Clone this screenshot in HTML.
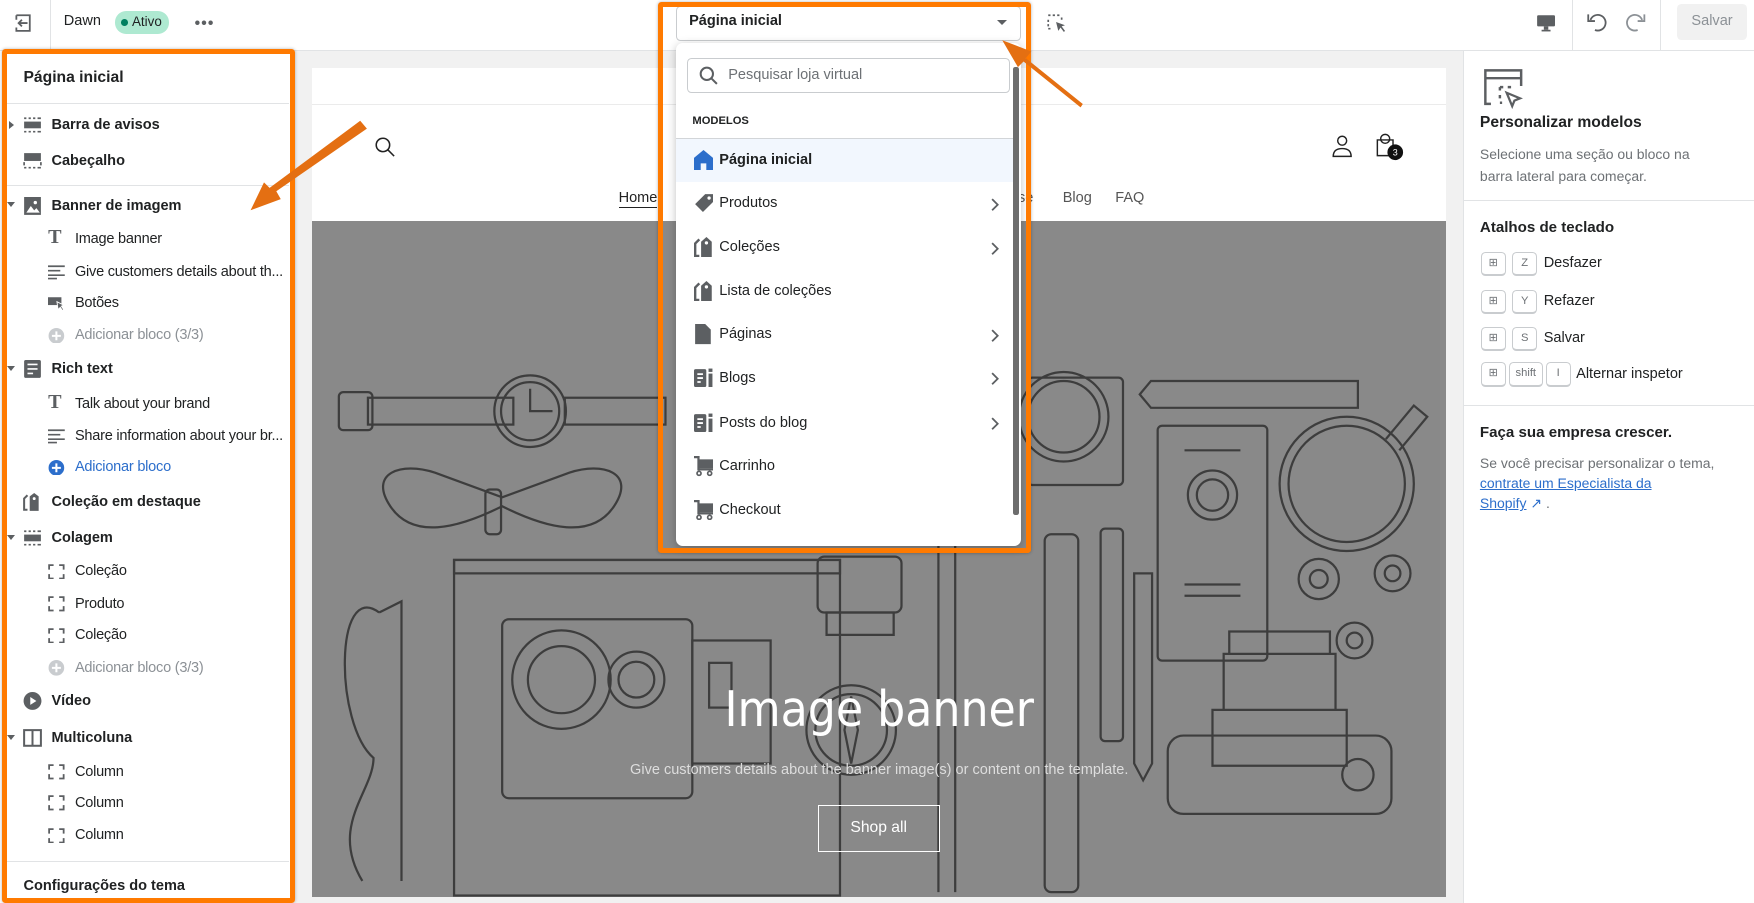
<!DOCTYPE html>
<html><head><meta charset="utf-8">
<style>
*{box-sizing:border-box;margin:0;padding:0}
html,body{width:1754px;height:903px;overflow:hidden;background:#fff}
#r{position:relative;width:1568px;height:807px;zoom:1.11862;font-family:"Liberation Sans",sans-serif;color:#202223;font-size:13px;background:#f1f1f1;overflow:hidden}
.a{position:absolute}
.b{font-weight:bold}
.sb{left:0;top:46px;width:262px;height:761px;background:#fff}
.it{position:absolute;left:0;width:258px;height:20px;line-height:20px;white-space:nowrap}
.it .t{position:absolute;left:46px}
.it.k .t{left:67px;font-weight:normal;letter-spacing:-0.2px}
.it .ic{position:absolute;left:21px;top:2px;width:17px;height:16px}
.it.k .ic{left:43px;top:3px;width:15px;height:14px}
.car{position:absolute;left:6px;top:7px;width:0;height:0;border-left:4px solid transparent;border-right:4px solid transparent;border-top:5px solid #5c5f62}
.carr{position:absolute;left:8px;top:6px;width:0;height:0;border-top:4px solid transparent;border-bottom:4px solid transparent;border-left:5px solid #5c5f62}
.hr{position:absolute;height:1px;background:#e1e3e5}
.dd{position:absolute;left:604px;top:38px;width:309px;height:450px;background:#fff;border-radius:6px;box-shadow:0 2px 8px rgba(0,0,0,.25)}
.di{position:absolute;left:0;width:302px;height:39px;line-height:39px;font-size:13px}
.di .t{position:absolute;left:39px}
.di svg{position:absolute;left:16px;top:10px}
.chev{position:absolute;left:282px !important;top:14px !important}
.key{position:absolute;height:22px;border:1px solid #c9cccf;border-bottom-width:2px;border-radius:4px;font-size:10px;color:#6d7175;text-align:center;line-height:19px}
.st{fill:none;stroke:#3d3d3d;stroke-width:2}
</style></head><body><div id="r">

<div class="a" style="left:0;top:0;width:1568px;height:46px;background:#fff;border-bottom:1px solid #e1e3e5"></div>
<div class="a" style="left:45px;top:0;width:1px;height:46px;background:#e1e3e5"></div>
<svg class="a" style="left:12px;top:12px" width="18" height="18" viewBox="0 0 18 18"><path d="M3 2h12v14H3v-3M3 6V2M13 9H5m3-3L5 9l3 3" fill="none" stroke="#5c5f62" stroke-width="1.6"/></svg>
<div class="a" style="left:57px;top:12px;font-size:13px">Dawn</div>
<div class="a" style="left:103px;top:10px;width:48px;height:20px;border-radius:10px;background:#aee9d1;font-size:12px;line-height:20px;padding-left:15px;color:#202223">Ativo</div>
<div class="a" style="left:108px;top:17px;width:6px;height:6px;border-radius:3px;background:#007f5f"></div>
<div class="a" style="left:174px;top:13px;font-size:14px;font-weight:bold;letter-spacing:1px;color:#5c5f62">•••</div>

<div class="a" style="left:604px;top:5px;width:309px;height:32px;border:1px solid #c9cccf;border-radius:4px;background:#fff"></div>
<div class="a b" style="left:616px;top:12px;font-size:13px">Página inicial</div>
<div class="a" style="left:891px;top:18px;border-left:5px solid transparent;border-right:5px solid transparent;border-top:5px solid #5c5f62"></div>
<svg class="a" style="left:935px;top:12px" width="18" height="18" viewBox="0 0 18 18"><path d="M2 2h2M6 2h2M10 2h2M2 6v2M2 10v2M2 14h2M14 4v2" stroke="#5c5f62" stroke-width="1.5" fill="none"/><path d="M9 8l8 3-3 1 3 4-1 1-3-4-2 3z" fill="#5c5f62"/></svg>

<svg class="a" style="left:1373px;top:12px" width="18" height="18" viewBox="0 0 18 18"><rect x="1" y="2" width="16" height="10" rx="1" fill="#5c5f62"/><rect x="7" y="12" width="4" height="3" fill="#5c5f62"/><rect x="5" y="15" width="8" height="1.5" fill="#5c5f62"/></svg>
<div class="a" style="left:1405px;top:0;width:1px;height:46px;background:#e1e3e5"></div>
<svg class="a" style="left:1418px;top:10px" width="22" height="20" viewBox="0 0 22 20"><path d="M4 8a7 7 0 1 1 4 9" fill="none" stroke="#5c5f62" stroke-width="1.6"/><path d="M2 3v6h6" fill="none" stroke="#5c5f62" stroke-width="1.6"/></svg>
<svg class="a" style="left:1450px;top:10px" width="22" height="20" viewBox="0 0 22 20"><path d="M18 8a7 7 0 1 0-4 9" fill="none" stroke="#8c9196" stroke-width="1.6"/><path d="M20 3v6h-6" fill="none" stroke="#8c9196" stroke-width="1.6"/></svg>
<div class="a" style="left:1484px;top:0;width:1px;height:46px;background:#e1e3e5"></div>
<div class="a" style="left:1499px;top:4px;width:63px;height:32px;background:#f1f1f1;border-radius:4px;color:#8c9196;text-align:center;line-height:32px;font-size:13px">Salvar</div>

<div class="a sb"></div>
<div class="a b" style="left:21px;top:62px;font-size:14px">Página inicial</div>
<div class="hr" style="left:6px;top:92px;width:252px"></div>

<div class="it" style="top:102px"><div class="carr"></div><svg class="ic" viewBox="0 0 17 16"><rect x="1" y="5" width="15" height="6" fill="#5c5f62"/><path d="M1 2h2M5 2h2M9 2h2M13 2h3M1 14h2M5 14h2M9 14h2M13 14h3" stroke="#5c5f62" stroke-width="1.5"/></svg><span class="t b">Barra de avisos</span></div>
<div class="it" style="top:134px"><svg class="ic" viewBox="0 0 17 16"><rect x="1" y="1" width="15" height="7" fill="#5c5f62"/><path d="M1 14h2M5 14h2M9 14h2M13 14h3M1 9v3M16 9v3" stroke="#5c5f62" stroke-width="1.5"/></svg><span class="t b">Cabeçalho</span></div>
<div class="hr" style="left:6px;top:165px;width:252px"></div>
<div class="it" style="top:174px"><div class="car"></div><svg class="ic" viewBox="0 0 17 16"><rect x="1" y="0" width="15" height="16" fill="#5c5f62"/><path d="M3 14l4-6 3 4 2-2 3 4z" fill="#fff"/><circle cx="11" cy="5" r="1.5" fill="#fff"/></svg><span class="t b">Banner de imagem</span></div>
<div class="it k" style="top:204px"><span class="ic" style="font-family:'Liberation Serif',serif;font-weight:bold;font-size:18px;line-height:14px;color:#5c5f62;top:2px">T</span><span class="t">Image banner</span></div>
<div class="it k" style="top:233px"><svg class="ic" viewBox="0 0 15 14"><path d="M0 2h15M0 6h11M0 10h15M0 13h8" stroke="#5c5f62" stroke-width="1.5"/></svg><span class="t">Give customers details about th...</span></div>
<div class="it k" style="top:261px"><svg class="ic" viewBox="0 0 15 14"><rect x="0" y="2" width="12" height="7" fill="#5c5f62"/><path d="M8 6l6 3-2 1 2 3-1 1-2-3-2 2z" fill="#5c5f62" stroke="#fff" stroke-width=".8"/></svg><span class="t">Botões</span></div>
<div class="it k" style="top:290px;color:#8c9196"><svg class="ic" viewBox="0 0 14 14"><circle cx="7" cy="7" r="7" fill="#c9cccf"/><path d="M7 3v8M3 7h8" stroke="#fff" stroke-width="1.8"/></svg><span class="t">Adicionar bloco (3/3)</span></div>
<div class="it" style="top:320px"><div class="car"></div><svg class="ic" viewBox="0 0 17 16"><rect x="1" y="0" width="15" height="16" rx="1.5" fill="#5c5f62"/><path d="M4 4h9M4 8h9M4 12h5" stroke="#fff" stroke-width="1.5"/></svg><span class="t b">Rich text</span></div>
<div class="it k" style="top:351px"><span class="ic" style="font-family:'Liberation Serif',serif;font-weight:bold;font-size:18px;line-height:14px;color:#5c5f62;top:2px">T</span><span class="t">Talk about your brand</span></div>
<div class="it k" style="top:380px"><svg class="ic" viewBox="0 0 15 14"><path d="M0 2h15M0 6h11M0 10h15M0 13h8" stroke="#5c5f62" stroke-width="1.5"/></svg><span class="t">Share information about your br...</span></div>
<div class="it k" style="top:408px;color:#2c6ecb"><svg class="ic" viewBox="0 0 14 14"><circle cx="7" cy="7" r="7" fill="#2c6ecb"/><path d="M7 3v8M3 7h8" stroke="#fff" stroke-width="1.8"/></svg><span class="t">Adicionar bloco</span></div>
<div class="it" style="top:439px"><svg class="ic" viewBox="0 0 17 16"><path d="M6 3l4-3 4 3v13H6z" fill="#5c5f62"/><path d="M4 2L1 5v10h3" fill="none" stroke="#5c5f62" stroke-width="1.8"/><circle cx="10" cy="5" r="1.3" fill="#fff"/></svg><span class="t b">Coleção em destaque</span></div>
<div class="it" style="top:471px"><div class="car"></div><svg class="ic" viewBox="0 0 17 16"><rect x="1" y="5" width="15" height="6" fill="#5c5f62"/><path d="M1 2h2M5 2h2M9 2h2M13 2h3M1 14h2M5 14h2M9 14h2M13 14h3" stroke="#5c5f62" stroke-width="1.5"/></svg><span class="t b">Colagem</span></div>
<div class="it k" style="top:501px"><svg class="ic" viewBox="0 0 15 14"><path d="M1 5V1h4M10 1h4v4M14 9v4h-4M5 13H1V9" fill="none" stroke="#5c5f62" stroke-width="1.6"/></svg><span class="t">Coleção</span></div>
<div class="it k" style="top:530px"><svg class="ic" viewBox="0 0 15 14"><path d="M1 5V1h4M10 1h4v4M14 9v4h-4M5 13H1V9" fill="none" stroke="#5c5f62" stroke-width="1.6"/></svg><span class="t">Produto</span></div>
<div class="it k" style="top:558px"><svg class="ic" viewBox="0 0 15 14"><path d="M1 5V1h4M10 1h4v4M14 9v4h-4M5 13H1V9" fill="none" stroke="#5c5f62" stroke-width="1.6"/></svg><span class="t">Coleção</span></div>
<div class="it k" style="top:587px;color:#8c9196"><svg class="ic" viewBox="0 0 14 14"><circle cx="7" cy="7" r="7" fill="#c9cccf"/><path d="M7 3v8M3 7h8" stroke="#fff" stroke-width="1.8"/></svg><span class="t">Adicionar bloco (3/3)</span></div>
<div class="it" style="top:617px"><svg class="ic" viewBox="0 0 17 16"><circle cx="8.5" cy="8" r="8" fill="#5c5f62"/><path d="M6.5 4.5v7l5.5-3.5z" fill="#fff"/></svg><span class="t b">Vídeo</span></div>
<div class="it" style="top:650px"><div class="car"></div><svg class="ic" viewBox="0 0 17 16"><rect x="1" y="1" width="15" height="14" fill="none" stroke="#5c5f62" stroke-width="1.8"/><path d="M8.5 1v14" stroke="#5c5f62" stroke-width="1.8"/></svg><span class="t b">Multicoluna</span></div>
<div class="it k" style="top:680px"><svg class="ic" viewBox="0 0 15 14"><path d="M1 5V1h4M10 1h4v4M14 9v4h-4M5 13H1V9" fill="none" stroke="#5c5f62" stroke-width="1.6"/></svg><span class="t">Column</span></div>
<div class="it k" style="top:708px"><svg class="ic" viewBox="0 0 15 14"><path d="M1 5V1h4M10 1h4v4M14 9v4h-4M5 13H1V9" fill="none" stroke="#5c5f62" stroke-width="1.6"/></svg><span class="t">Column</span></div>
<div class="it k" style="top:737px"><svg class="ic" viewBox="0 0 15 14"><path d="M1 5V1h4M10 1h4v4M14 9v4h-4M5 13H1V9" fill="none" stroke="#5c5f62" stroke-width="1.6"/></svg><span class="t">Column</span></div>
<div class="hr" style="left:6px;top:770px;width:252px"></div>
<div class="a b" style="left:21px;top:785px;font-size:13px">Configurações do tema</div>

<div class="a" style="left:279px;top:61px;width:1014px;height:741px;background:#fff"></div>
<div class="hr" style="left:279px;top:93px;width:1014px;background:#ebebeb"></div>
<svg class="a" style="left:334px;top:122px" width="20" height="20" viewBox="0 0 20 20"><circle cx="8" cy="8" r="6" fill="none" stroke="#222" stroke-width="1.4"/><path d="M12.5 12.5L18 18" stroke="#222" stroke-width="1.4"/></svg>
<div class="a" style="left:553px;top:170px;font-size:13px;color:#222;border-bottom:1px solid #222;line-height:15px">Home</div>
<div class="a" style="left:910px;top:170px;font-size:13px;color:#555;line-height:15px">se</div>
<div class="a" style="left:950px;top:170px;font-size:13px;color:#555;line-height:15px">Blog</div>
<div class="a" style="left:997px;top:170px;font-size:13px;color:#555;line-height:15px">FAQ</div>
<svg class="a" style="left:1190px;top:120px" width="20" height="22" viewBox="0 0 20 22"><circle cx="10" cy="6" r="4" fill="none" stroke="#222" stroke-width="1.3"/><path d="M2 20c0-5 3-7 8-7s8 2 8 7z" fill="none" stroke="#222" stroke-width="1.3"/></svg>
<svg class="a" style="left:1228px;top:117px" width="30" height="28" viewBox="0 0 30 28"><path d="M3 8h14v14H3z" fill="none" stroke="#222" stroke-width="1.3"/><circle cx="10" cy="7" r="4" fill="none" stroke="#222" stroke-width="1.3"/><circle cx="19" cy="19" r="7" fill="#111"/><text x="19" y="22" font-size="8" fill="#fff" text-anchor="middle" font-family="Liberation Sans">3</text></svg>

<div class="a" style="left:279px;top:198px;width:1014px;height:604px;background:#898989;overflow:hidden">
<svg width="1014" height="604" viewBox="0 0 1014 604">
<g class="st">
<rect x="24" y="153" width="30" height="34" rx="4"/><rect x="50" y="158" width="130" height="24"/><circle cx="195" cy="170" r="32"/><circle cx="195" cy="170" r="26"/><rect x="226" y="158" width="90" height="24"/>
<path d="M195 150v20h20"/>
<path d="M70 255c-20-30 10-40 40-30l60 22 60-22c30-10 60 0 40 30-20 30-60 20-100 0-40 20-80 30-100 0z"/><rect x="155" y="240" width="14" height="40" rx="4"/>
<path d="M60 350c-40-30-40 100-5 130 0 30-40 60-10 110M60 350l20-10v250"/>
<rect x="127" y="303" width="345" height="300"/><rect x="127" y="303" width="345" height="12"/>
<rect x="170" y="356" width="170" height="160" rx="6"/><circle cx="223" cy="410" r="44"/><circle cx="223" cy="410" r="30"/><circle cx="290" cy="410" r="25"/><circle cx="290" cy="410" r="16"/><rect x="340" y="375" width="70" height="110"/><rect x="355" y="395" width="20" height="40"/>
<rect x="452" y="300" width="75" height="50" rx="6"/><path d="M460 350h60v20h-60z"/>
<circle cx="482" cy="455" r="40"/><circle cx="482" cy="455" r="32"/><path d="M482 425l6 30-6 30-6-30z"/>
<path d="M560 280v320M575 280v320"/>
<rect x="655" y="280" width="30" height="320" rx="6"/><rect x="705" y="275" width="20" height="190" rx="4"/><path d="M735 315v170l8 15 8-15V315z"/>
<rect x="640" y="140" width="85" height="96" rx="4"/><circle cx="672" cy="175" r="40"/><circle cx="672" cy="175" r="32"/>
<path d="M750 143h185v24H750l-10-12z"/>
<rect x="756" y="183" width="98" height="210" rx="4"/><circle cx="805" cy="245" r="22"/><circle cx="805" cy="245" r="14"/><path d="M780 205h50M780 325h50M780 335h50"/>
<circle cx="925" cy="235" r="60"/><circle cx="925" cy="235" r="52"/><path d="M960 195l25-30 12 10-25 30"/>
<circle cx="900" cy="320" r="18"/><circle cx="900" cy="320" r="8"/><circle cx="966" cy="315" r="16"/><circle cx="966" cy="315" r="7"/><circle cx="932" cy="375" r="16"/><circle cx="932" cy="375" r="7"/>
<path d="M820 367h90v20h-90zM815 387h100v50H815zM805 437h120v50H805z"/><rect x="765" y="460" width="200" height="70" rx="14"/><circle cx="935" cy="495" r="14"/>
</g></svg>
</div>
<div class="a" style="left:279px;top:608px;width:1014px;text-align:center;font-size:44px;color:#fff;font-family:'DejaVu Sans Condensed','Liberation Sans Narrow',sans-serif;font-weight:300">Image banner</div>
<div class="a" style="left:279px;top:681px;width:1014px;text-align:center;font-size:13px;color:#ddd">Give customers details about the banner image(s) or content on the template.</div>
<div class="a" style="left:731px;top:720px;width:109px;height:42px;border:1px solid #fff;color:#fff;text-align:center;line-height:40px;font-size:14px">Shop all</div>

<div class="dd">
<div class="a" style="left:10px;top:14px;width:289px;height:31px;border:1px solid #c9cccf;border-radius:4px"></div>
<svg class="a" style="left:21px;top:21px" width="17" height="17" viewBox="0 0 17 17"><circle cx="7" cy="7" r="5.5" fill="none" stroke="#5c5f62" stroke-width="1.8"/><path d="M11 11l5 5" stroke="#5c5f62" stroke-width="1.8"/></svg>
<div class="a" style="left:47px;top:22px;color:#6d7175;font-size:13px">Pesquisar loja virtual</div>
<div class="a b" style="left:15px;top:65px;font-size:10px;color:#202223">MODELOS</div>
<div class="hr" style="left:0;top:85px;width:302px;background:#d2d5d8"></div>
<div class="di b" style="top:86px;background:#f2f7fe"><svg width="17" height="18" viewBox="0 0 17 18"><path d="M8.5 0l8.5 7v11h-6v-6H6v6H0V7z" fill="#2c6ecb"/></svg><span class="t">Página inicial</span></div>
<div class="di" style="top:125px"><svg width="18" height="18" viewBox="0 0 18 18"><path d="M10 1h7v7l-9 9-7-7z" fill="#5c5f62"/><circle cx="13.5" cy="4.5" r="1.5" fill="#fff"/></svg><span class="t">Produtos</span><svg class="chev" width="8" height="12" viewBox="0 0 8 12"><path d="M1 1l5 5-5 5" fill="none" stroke="#5c5f62" stroke-width="1.6"/></svg></div>
<div class="di" style="top:164px"><svg width="18" height="18" viewBox="0 0 17 17"><path d="M6 4l4.5-4 4.5 4v13H6z" fill="#5c5f62"/><path d="M4.5 2L1 5.5V16h3.5" fill="none" stroke="#5c5f62" stroke-width="2"/><circle cx="10.5" cy="5" r="1.4" fill="#fff"/></svg><span class="t">Coleções</span><svg class="chev" width="8" height="12" viewBox="0 0 8 12"><path d="M1 1l5 5-5 5" fill="none" stroke="#5c5f62" stroke-width="1.6"/></svg></div>
<div class="di" style="top:203px"><svg width="18" height="18" viewBox="0 0 17 17"><path d="M6 4l4.5-4 4.5 4v13H6z" fill="#5c5f62"/><path d="M4.5 2L1 5.5V16h3.5" fill="none" stroke="#5c5f62" stroke-width="2"/><circle cx="10.5" cy="5" r="1.4" fill="#fff"/></svg><span class="t">Lista de coleções</span></div>
<div class="di" style="top:242px"><svg width="16" height="18" viewBox="0 0 16 18"><path d="M1 0h9l5 5v13H1z" fill="#5c5f62"/></svg><span class="t">Páginas</span><svg class="chev" width="8" height="12" viewBox="0 0 8 12"><path d="M1 1l5 5-5 5" fill="none" stroke="#5c5f62" stroke-width="1.6"/></svg></div>
<div class="di" style="top:281px"><svg width="18" height="18" viewBox="0 0 18 18"><rect x="0" y="1" width="11" height="16" rx="1.5" fill="#5c5f62"/><path d="M3 5.5h5M3 9h5M3 12.5h3" stroke="#fff" stroke-width="1.6"/><rect x="13" y="5" width="3.5" height="12" fill="#5c5f62"/><rect x="13" y="0.5" width="3.5" height="3" fill="#5c5f62"/></svg><span class="t">Blogs</span><svg class="chev" width="8" height="12" viewBox="0 0 8 12"><path d="M1 1l5 5-5 5" fill="none" stroke="#5c5f62" stroke-width="1.6"/></svg></div>
<div class="di" style="top:321px"><svg width="18" height="18" viewBox="0 0 18 18"><rect x="0" y="1" width="11" height="16" rx="1.5" fill="#5c5f62"/><path d="M3 5.5h5M3 9h5M3 12.5h3" stroke="#fff" stroke-width="1.6"/><rect x="13" y="5" width="3.5" height="12" fill="#5c5f62"/><rect x="13" y="0.5" width="3.5" height="3" fill="#5c5f62"/></svg><span class="t">Posts do blog</span><svg class="chev" width="8" height="12" viewBox="0 0 8 12"><path d="M1 1l5 5-5 5" fill="none" stroke="#5c5f62" stroke-width="1.6"/></svg></div>
<div class="di" style="top:360px"><svg width="18" height="18" viewBox="0 0 18 18"><path d="M0 1h4v11h13" fill="none" stroke="#5c5f62" stroke-width="2"/><rect x="4" y="3" width="13" height="8" fill="#5c5f62"/><circle cx="4.5" cy="15.5" r="1.8" fill="none" stroke="#5c5f62" stroke-width="1.5"/><circle cx="14" cy="15.5" r="1.8" fill="none" stroke="#5c5f62" stroke-width="1.5"/></svg><span class="t">Carrinho</span></div>
<div class="di" style="top:399px"><svg width="18" height="18" viewBox="0 0 18 18"><path d="M0 1h4v11h13" fill="none" stroke="#5c5f62" stroke-width="2"/><rect x="4" y="3" width="13" height="8" fill="#5c5f62"/><circle cx="4.5" cy="15.5" r="1.8" fill="none" stroke="#5c5f62" stroke-width="1.5"/><circle cx="14" cy="15.5" r="1.8" fill="none" stroke="#5c5f62" stroke-width="1.5"/></svg><span class="t">Checkout</span></div>
<div class="a" style="left:302px;top:22px;width:5px;height:400px;background:#6d6d6d;border-radius:2px"></div>
</div>

<div class="a" style="left:1308px;top:46px;width:260px;height:761px;background:#fff;border-left:1px solid #e1e3e5"></div>
<svg class="a" style="left:1325px;top:60px" width="38" height="38" viewBox="0 0 38 38"><path d="M8 33H3V3h32v14M3 10h32" fill="none" stroke="#5c5f62" stroke-width="2.2"/><path d="M16 18h3M23 18h3M16 18v3M16 25v3M16 32h2" stroke="#5c5f62" stroke-width="2.2" fill="none"/><path d="M22 23l12 5-5 2-2 5z" fill="none" stroke="#5c5f62" stroke-width="2"/></svg>
<div class="a b" style="left:1323px;top:102px;font-size:14px">Personalizar modelos</div>
<div class="a" style="left:1323px;top:129px;font-size:12.5px;line-height:19px;color:#6d7175;width:200px">Selecione uma seção ou bloco na barra lateral para começar.</div>
<div class="hr" style="left:1309px;top:179px;width:259px"></div>
<div class="a b" style="left:1323px;top:196px;font-size:13.5px">Atalhos de teclado</div>
<div class="key" style="left:1324px;top:225px;width:22px">⊞</div><div class="key" style="left:1352px;top:225px;width:22px">Z</div><div class="a" style="left:1380px;top:228px;font-size:13px">Desfazer</div>
<div class="key" style="left:1324px;top:259px;width:22px">⊞</div><div class="key" style="left:1352px;top:259px;width:22px">Y</div><div class="a" style="left:1380px;top:262px;font-size:13px">Refazer</div>
<div class="key" style="left:1324px;top:292px;width:22px">⊞</div><div class="key" style="left:1352px;top:292px;width:22px">S</div><div class="a" style="left:1380px;top:295px;font-size:13px">Salvar</div>
<div class="key" style="left:1324px;top:324px;width:22px">⊞</div><div class="key" style="left:1349px;top:324px;width:30px">shift</div><div class="key" style="left:1382px;top:324px;width:22px">I</div><div class="a" style="left:1409px;top:327px;font-size:13px">Alternar inspetor</div>
<div class="hr" style="left:1309px;top:362px;width:259px"></div>
<div class="a b" style="left:1323px;top:379px;font-size:13.5px">Faça sua empresa crescer.</div>
<div class="a" style="left:1323px;top:405px;font-size:12.5px;line-height:18px;color:#6d7175;width:240px;white-space:nowrap">Se você precisar personalizar o tema,<br><span style="color:#2c6ecb;text-decoration:underline">contrate um Especialista da</span><br><span style="color:#2c6ecb;text-decoration:underline">Shopify</span> <span style="color:#2c6ecb">↗</span> .</div>

<div class="a" style="left:2px;top:44px;width:262px;height:763px;border:5px solid #ff7a00;border-radius:3px;box-shadow:0 0 3px rgba(0,0,0,.3)"></div>
<div class="a" style="left:588px;top:2px;width:334px;height:492px;border:5px solid #ff7a00;border-radius:3px;box-shadow:0 0 3px rgba(0,0,0,.3)"></div>

<svg class="a" style="left:0;top:0" width="1568" height="807" viewBox="0 0 1568 807">
<path d="M328 115L247 171l4 7-27 10 12-25 5 5 81-60z" fill="#e46f12"/>
<path d="M968 93L917 52l5-6-26-10 14 24 5-5 51 41z" fill="#e46f12"/>
</svg>
</div></body></html>
